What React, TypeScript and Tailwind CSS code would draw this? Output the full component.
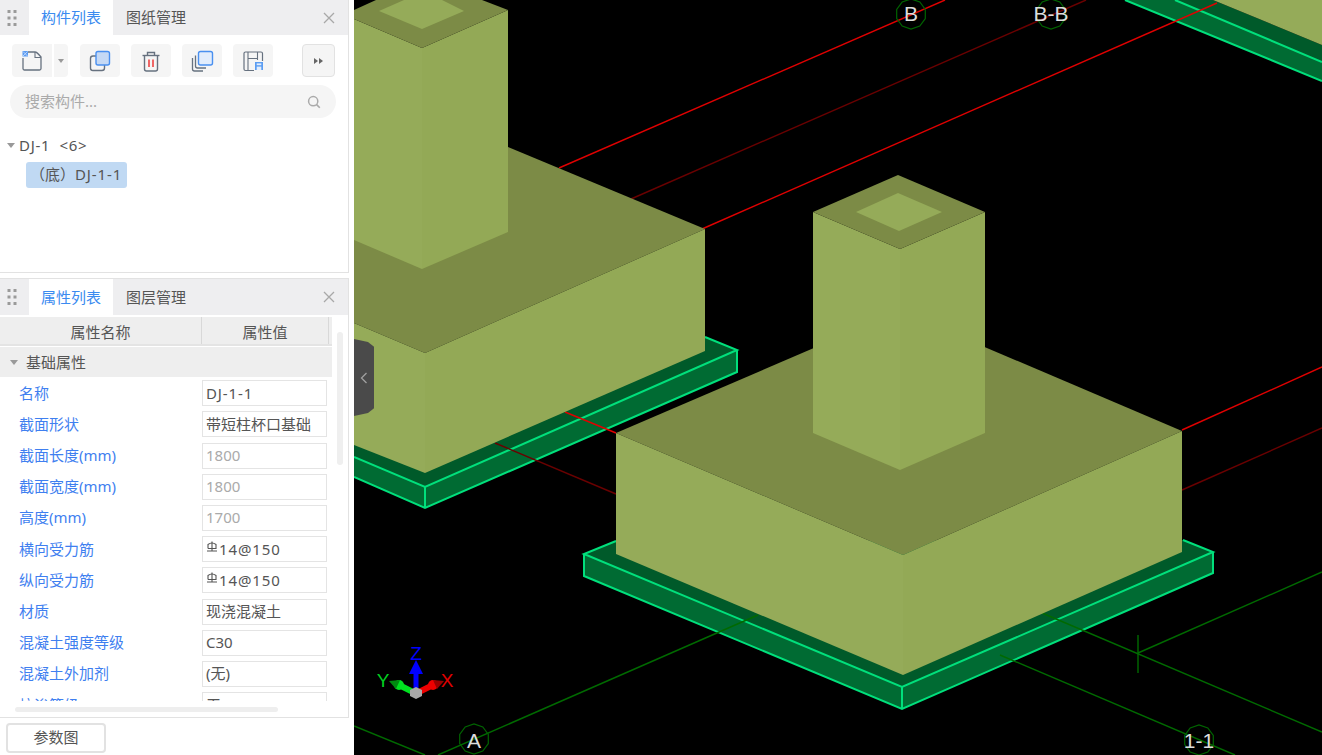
import React from "react";

const GREY = "#66717f";

function Grip() {
  return (
    <svg width="10" height="18" viewBox="0 0 10 18" className="ml-[7px] mr-[12px] shrink-0">
      {[0, 6.5, 13].map((y) =>
        [0, 6].map((x) => <rect key={`${x}-${y}`} x={x + 0.5} y={y + 1} width="3" height="3" fill="#9a9a9a" />)
      )}
    </svg>
  );
}

function CloseX() {
  return (
    <svg width="12" height="12" viewBox="0 0 12 12" className="ml-auto mr-[13px] shrink-0">
      <path d="M1 1 L11 11 M11 1 L1 11" stroke="#a8a8a8" strokeWidth="1.3" fill="none" />
    </svg>
  );
}

function TabBar({ active, other, h }: { active: string; other: string; h: string }) {
  return (
    <div className={`flex items-stretch bg-[#eeeef0] ${h}`}>
      <div className="flex items-center">
        <Grip />
      </div>
      <div className="flex w-[84px] items-center justify-center bg-white text-[#3b8bf0]">{active}</div>
      <div className="flex w-[86px] items-center justify-center text-[#555555]">{other}</div>
      <div className="ml-auto flex items-center">
        <CloseX />
      </div>
    </div>
  );
}

function IconNew() {
  return (
    <svg width="24" height="24" viewBox="0 0 24 24">
      <path d="M8 3 H15 Q17 3 21 8 V19.5 a1.5 1.5 0 0 1 -1.5 1.5 H4.5 a1.5 1.5 0 0 1 -1.5 -1.5 V9" fill="none" stroke={GREY} strokeWidth="1.3" />
      <path d="M15 3 V8.5 H21" fill="none" stroke={GREY} strokeWidth="1.1" />
      <rect x="2.5" y="2" width="5.5" height="5.5" fill="#5a9bf2" />
      <path d="M3 2.5 L7.5 7 M7.5 2.5 L3 7" stroke="#cfe2fb" strokeWidth="0.8" />
    </svg>
  );
}

function IconCopy() {
  return (
    <svg width="24" height="24" viewBox="0 0 24 24">
      <rect x="2.5" y="7" width="14" height="14.5" rx="2.5" fill="none" stroke={GREY} strokeWidth="1.4" />
      <rect x="8" y="2.5" width="13.5" height="13.5" rx="2" fill="#c5d9f5" stroke="#4a90f0" strokeWidth="1.4" />
    </svg>
  );
}

function IconTrash() {
  return (
    <svg width="24" height="24" viewBox="0 0 24 24">
      <path d="M3.5 6.5 H20.5" stroke={GREY} strokeWidth="1.4" fill="none" />
      <path d="M8.5 6 V3.5 H15.5 V6" stroke={GREY} strokeWidth="1.4" fill="none" />
      <path d="M5.5 6.5 V20 a2 2 0 0 0 2 2 H16.5 a2 2 0 0 0 2 -2 V6.5" stroke={GREY} strokeWidth="1.4" fill="none" />
      <path d="M10 10.5 V18 M14 10.5 V18" stroke="#ee4444" strokeWidth="1.6" fill="none" />
    </svg>
  );
}

function IconStack() {
  return (
    <svg width="24" height="24" viewBox="0 0 24 24">
      <path d="M2.5 9 V20 a2 2 0 0 0 2 2 H13" fill="none" stroke={GREY} strokeWidth="1.3" />
      <path d="M5.5 6.5 V17 a2 2 0 0 0 2 2 H16" fill="none" stroke={GREY} strokeWidth="1.3" />
      <rect x="8.5" y="2.5" width="14" height="13.5" rx="2" fill="#e2edfc" stroke="#4a90f0" strokeWidth="1.4" />
    </svg>
  );
}

function IconSaveAs() {
  return (
    <svg width="24" height="24" viewBox="0 0 24 24">
      <path d="M13 21.5 H4.5 a1.5 1.5 0 0 1 -1.5 -1.5 V4.5 a1.5 1.5 0 0 1 1.5 -1.5 H20 a1.5 1.5 0 0 1 1.5 1.5 V12" fill="none" stroke={GREY} strokeWidth="1.2" />
      <path d="M7 3 V21.5 M7 9.5 H16.5 M16.5 3 V11" fill="none" stroke={GREY} strokeWidth="1.1" />
      <rect x="14" y="13" width="8" height="8" fill="#5b9df2" />
      <rect x="15.7" y="14.4" width="4.6" height="1.8" fill="#e2edfc" />
      <rect x="15.7" y="17.6" width="4.6" height="3.4" fill="#e2edfc" />
    </svg>
  );
}

function ToolBtn({ children }: { children: React.ReactNode }) {
  return <div className="flex h-[33px] w-[40px] items-center justify-center rounded-[4px] bg-[#f5f5f5]">{children}</div>;
}

function Rebar() {
  return (
    <svg width="12" height="12" viewBox="0 0 12 12" className="mr-[1px] mt-[-5px] shrink-0">
      <path d="M2 7.5 V3.5 Q6 0.5 10 3.5 V7.5 H2" fill="none" stroke="#555555" strokeWidth="1.1" />
      <path d="M6 0.5 V10 M1 10 H11" fill="none" stroke="#555555" strokeWidth="1.1" />
    </svg>
  );
}

const rows: { label: string; value: string; gray?: boolean; rebar?: boolean; wide?: boolean }[] = [
  { label: "名称", value: "DJ-1-1", wide: true },
  { label: "截面形状", value: "带短柱杯口基础" },
  { label: "截面长度(mm)", value: "1800", gray: true },
  { label: "截面宽度(mm)", value: "1800", gray: true },
  { label: "高度(mm)", value: "1700", gray: true },
  { label: "横向受力筋", value: "14@150", rebar: true, wide: true },
  { label: "纵向受力筋", value: "14@150", rebar: true, wide: true },
  { label: "材质", value: "现浇混凝土" },
  { label: "混凝土强度等级", value: "C30" },
  { label: "混凝土外加剂", value: "(无)" },
  { label: "抗渗等级", value: "无" },
];

function Polygon({ cx, cy, r }: { cx: number; cy: number; r: number }) {
  const pts = Array.from({ length: 10 }, (_, i) => {
    const a = (Math.PI * 2 * i) / 10 + Math.PI / 10;
    return `${(cx + r * Math.cos(a)).toFixed(1)},${(cy + r * Math.sin(a)).toFixed(1)}`;
  }).join(" ");
  return <polygon points={pts} fill="none" stroke="#006400" strokeWidth="1.2" />;
}

function Label({ x, y, children }: { x: number; y: number; children: string }) {
  return (
    <text x={x} y={y} textAnchor="middle" fontSize="21" fill="#dddddd" fontFamily="'Liberation Sans', sans-serif">
      {children}
    </text>
  );
}

const TOP = "#7c8b46";
const LEFT = "#95ab59";
const RIGHT = "#93a956";
const PT = "#005a2a";
const PS = "#006b33";
const PB = "#00e07c";
const RED = "#e00000";
const DRED = "#6a0000";
const GRN = "#006a00";

function Scene() {
  return (
    <svg viewBox="354 0 968 755" className="block h-full w-full" shapeRendering="geometricPrecision">
      <rect x="354" y="0" width="968" height="755" fill="#000000" />

      {/* plate: upper right */}
      <polygon points="1125,0 1322,81 1322,62 1175,0" fill={PS} />
      <polygon points="1175,0 1322,62 1322,45 1213,0" fill={PT} />
      <polygon points="1213,0 1322,0 1322,45" fill={LEFT} />
      <path d="M1125 0 L1322 81 M1175 0 L1322 62" stroke={PB} strokeWidth="2" fill="none" />

      {/* plate: upper left */}
      <polygon points="354,457 425,487 737,350 705,337 354,445" fill={PT} />
      <polygon points="354,457 425,487 425,508 354,477" fill={PS} />
      <polygon points="425,487 737,350 737,372 425,508" fill={PS} />
      <path d="M354 457 L425 487 L737 350 L705 337 M425 487 V508 M354 477 L425 508 L737 372 V350" stroke={PB} strokeWidth="2" fill="none" />

      {/* plate: main */}
      <polygon points="584,554 902,687 1213,552 1183,540 616,541" fill={PT} />
      <polygon points="584,554 902,687 902,709 584,576" fill={PS} />
      <polygon points="902,687 1213,552 1213,573 902,709" fill={PS} />
      <path d="M616 541 L584 554 L902 687 L1213 552 L1183 540 M902 687 V709 M584 554 V576 L902 709 L1213 573 V552" stroke={PB} strokeWidth="2" fill="none" />

      {/* axis lines */}
      <g fill="none" strokeWidth="1.4">
        <path d="M559 168 L945 0" stroke={RED} />
        <path d="M631 199 L1086 0" stroke={DRED} />
        <path d="M702 229 L1217 3" stroke={RED} />
        <path d="M1182 430 L1322 367" stroke={RED} />
        <path d="M1182 490 L1322 428" stroke={DRED} />
        <path d="M565 412 L616 433" stroke={RED} />
        <path d="M495 443 L616 494" stroke={DRED} />
        <path d="M758 615 L438 755" stroke={GRN} />
        <path d="M354 726 L425 755" stroke={GRN} />
        <path d="M1138 653 L1322 572" stroke={GRN} />
        <path d="M1042 613 L1322 732" stroke={GRN} />
        <path d="M1000 655 L1235 755" stroke={GRN} />
        <path d="M1138 635 V673" stroke={GRN} />
      </g>

      {/* upper-left footing */}
      <polygon points="354,100 508,147 705,229 425,353 354,323" fill={TOP} />
      <polygon points="354,323 425,353 425,473 354,445" fill={LEFT} />
      <polygon points="425,353 705,229 705,351 425,473" fill={RIGHT} />
      <polygon points="354,19 422,48 422,269 354,240" fill={LEFT} />
      <polygon points="422,48 508,10 508,232 422,269" fill={RIGHT} />
      <polygon points="354,10 376,0 482,0 508,10 422,48 354,19" fill={TOP} />
      <polygon points="404,0 442,0 464,11 422,29 379,11" fill={LEFT} />

      {/* main footing */}
      <polygon points="616,433 900,311 1182,431 903,555" fill={TOP} />
      <polygon points="616,433 903,555 903,675 616,554" fill={LEFT} />
      <polygon points="903,555 1182,431 1182,552 903,675" fill={RIGHT} />
      <polygon points="813,212 900,249 900,470 813,433" fill={LEFT} />
      <polygon points="900,249 985,212 985,433 900,470" fill={RIGHT} />
      <polygon points="813,212 898,175 985,212 900,249" fill={TOP} />
      <polygon points="856,212 898,193 942,212 899,231" fill={LEFT} />

      {/* axis bubbles */}
      <Polygon cx={911} cy={14} r={15} />
      <Polygon cx={1051} cy={14} r={15} />
      <Polygon cx={474} cy={739} r={15} />
      <Polygon cx={1199} cy={740} r={15} />
      <Label x={911} y={21}>B</Label>
      <Label x={1051} y={21}>B-B</Label>
      <Label x={474} y={748}>A</Label>
      <Label x={1199} y={748}>1-1</Label>

      {/* gizmo */}
      <g>
        <path d="M416 688 V672" stroke="#0000ff" strokeWidth="5" />
        <polygon points="416,660 409,674 423,674" fill="#0000ff" />
        <path d="M411 691 L399 685" stroke="#00e020" strokeWidth="6" strokeLinecap="round" />
        <circle cx="399" cy="685" r="5" fill="#00e020" />
        <polygon points="389,681 400,680 396,689" fill="#008a10" />
        <path d="M421 691 L433 685" stroke="#ee0000" strokeWidth="6" strokeLinecap="round" />
        <circle cx="433" cy="685" r="5" fill="#ee0000" />
        <polygon points="444,681 433,680 437,689" fill="#9a0000" />
        <polygon points="416,687 422,690 422,696 416,699 410,696 410,690" fill="#a8a8a8" />
        <text x="416" y="660" textAnchor="middle" fontSize="19" fill="#0000ff" fontFamily="'Liberation Sans', sans-serif">Z</text>
        <text x="383" y="687" textAnchor="middle" fontSize="19" fill="#00d020" fontFamily="'Liberation Sans', sans-serif">Y</text>
        <text x="447" y="687" textAnchor="middle" fontSize="19" fill="#e00000" fontFamily="'Liberation Sans', sans-serif">X</text>
      </g>
    </svg>
  );
}

export default function App() {
  return (
    <div
      className="flex h-[755px] w-[1322px] overflow-hidden bg-white text-[15px] leading-none text-[#555555]"
      style={{ fontFamily: "'Noto Sans', 'Noto Sans CJK SC', sans-serif" }}
    >
      <aside className="flex w-[354px] shrink-0 flex-col bg-white">
        {/* component list panel */}
        <section className="h-[273px] w-[349px] border-b border-r border-[#e2e2e2]">
          <TabBar active="构件列表" other="图纸管理" h="h-[35px]" />
          <div className="mt-[9px] flex items-center pl-[12px]">
            <div className="flex h-[33px] w-[56px] overflow-hidden rounded-[4px]">
              <div className="flex w-[40px] items-center justify-center bg-[#f5f5f5]">
                <IconNew />
              </div>
              <div className="ml-[2px] flex w-[14px] items-center justify-center bg-[#f5f5f5]">
                <div className="h-0 w-0 border-x-[3.5px] border-t-[4px] border-x-transparent border-t-[#999999]" />
              </div>
            </div>
            <div className="ml-[12px] flex gap-[11px]">
              <ToolBtn><IconCopy /></ToolBtn>
              <ToolBtn><IconTrash /></ToolBtn>
              <ToolBtn><IconStack /></ToolBtn>
              <ToolBtn><IconSaveAs /></ToolBtn>
            </div>
            <div className="ml-[29px] flex h-[33px] w-[33px] items-center justify-center gap-[1px] rounded-[4px] border border-[#e2e2e2] bg-[#f5f5f5]">
              <div className="h-0 w-0 border-y-[3.5px] border-l-[4px] border-y-transparent border-l-[#666666]" />
              <div className="h-0 w-0 border-y-[3.5px] border-l-[4px] border-y-transparent border-l-[#666666]" />
            </div>
          </div>
          <div className="ml-[10px] mt-[8px] flex h-[33px] w-[326px] items-center rounded-full bg-[#f5f5f5] pl-[15px] pr-[15px] text-[#aaaaaa]">
            <span>搜索构件...</span>
            <svg width="14" height="14" viewBox="0 0 14 14" className="ml-auto">
              <circle cx="6.2" cy="6.2" r="4.6" fill="none" stroke="#aaaaaa" strokeWidth="1.5" />
              <path d="M9.6 9.6 L12.8 12.8" stroke="#aaaaaa" strokeWidth="1.6" />
            </svg>
          </div>
          <div className="mt-[18px] flex h-[18px] items-center pl-[7px]">
            <div className="mr-[4px] h-0 w-0 border-x-[4px] border-t-[5px] border-x-transparent border-t-[#999999]" />
            <span className="tracking-[0.7px]">DJ-1&nbsp;&nbsp;&lt;6&gt;</span>
          </div>
          <div className="ml-[26px] mt-[8px] flex h-[26px] w-[101px] items-center rounded-[3px] bg-[#c0d9f3] pb-[2px] pl-[4px]">
            （底）<span className="tracking-[0.9px]">DJ-1-1</span>
          </div>
        </section>

        {/* property panel */}
        <section className="mt-[5px] h-[440px] w-[349px] border-b border-r border-t border-[#e2e2e2]">
          <TabBar active="属性列表" other="图层管理" h="h-[36px]" />
          <div className="mt-[2px] flex">
            <div className="h-[384px] w-[332px] overflow-hidden">
              <div className="flex h-[29px] border-b-2 border-[#e4e4e4] bg-[#eeeeee]">
                <div className="flex w-[202px] items-center justify-center border-r border-[#d8d8d8] pt-[3px]">属性名称</div>
                <div className="flex w-[127px] items-center justify-center border-r border-[#d8d8d8] pt-[3px]">属性值</div>
              </div>
              <div className="mt-[1px] flex h-[30px] items-center bg-[#eeeeee] pl-[10px]">
                <div className="mr-[8px] h-0 w-0 border-x-[4px] border-t-[5px] border-x-transparent border-t-[#999999]" />
                <span>基础属性</span>
              </div>
              <div className="pt-[0.6px]">
                {rows.map((r) => (
                  <div key={r.label} className="flex h-[31.2px] items-center">
                    <div className="w-[202px] pl-[19px] text-[#3f7ff0]">{r.label}</div>
                    <div
                      className={`flex h-[26px] w-[125px] items-center border border-[#e4e4e4] pl-[3px] ${
                        r.gray ? "text-[#aaaaaa]" : "text-[#555555]"
                      }`}
                    >
                      {r.rebar && <Rebar />}
                      <span className={r.wide ? "tracking-[0.9px]" : ""}>{r.value}</span>
                    </div>
                  </div>
                ))}
              </div>
            </div>
            <div className="ml-[5px] mt-[15px] h-[133px] w-[6px] rounded-full bg-[#efefef]" />
          </div>
          <div className="ml-[15px] mt-[6px] h-[5px] w-[263px] rounded-full bg-[#eeeeee]" />
        </section>

        <div className="ml-[6px] mt-[5px] flex h-[30px] w-[100px] items-center justify-center rounded-[4px] border-2 border-[#e2e2e2] pb-[2px]">
          参数图
        </div>
      </aside>

      <main className="relative flex-1">
        <Scene />
        <div
          className="absolute left-0 top-[339px] flex h-[77px] w-[20px] items-center justify-center bg-[#4a4a4a]"
          style={{ clipPath: "polygon(0 0, 70% 4%, 100% 10%, 100% 90%, 70% 96%, 0 100%)" }}
        >
          <svg width="8" height="12" viewBox="0 0 8 12">
            <path d="M6.5 1 L1.5 6 L6.5 11" fill="none" stroke="#a0a0a0" strokeWidth="1.3" />
          </svg>
        </div>
      </main>
    </div>
  );
}
